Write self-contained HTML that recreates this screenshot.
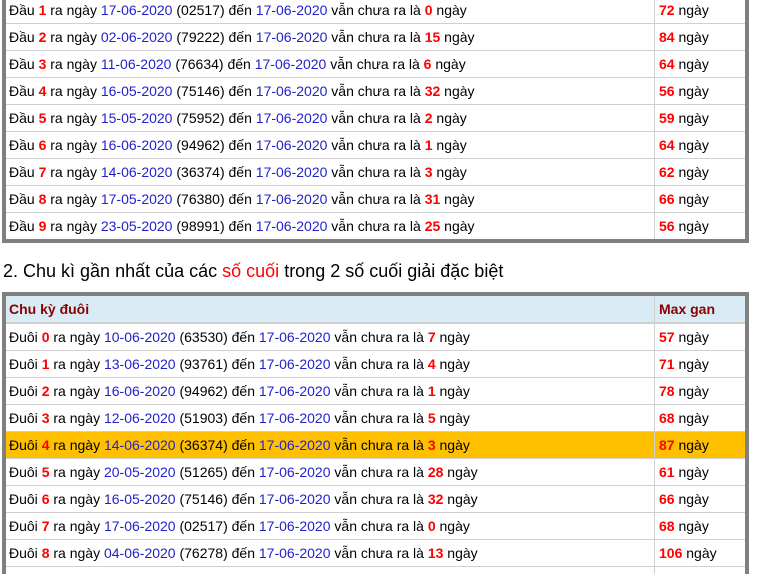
<!DOCTYPE html>
<html><head><meta charset="utf-8"><style>
html,body{margin:0;width:760px;height:574px;overflow:hidden;background:#fff;font-family:"Liberation Sans",Arial,sans-serif;font-size:14px;color:#000;position:relative}
.t{position:absolute;left:2px;width:739px;border:4px solid #808080}
.r{height:26px;border-bottom:1px solid #d0d0d0;display:flex;line-height:26px}
.r:last-child{border-bottom:none}
.c1{width:645px;padding-left:3px;border-right:1px solid #d0d0d0}
.c2{padding-left:4px}
.n{color:#f00;font-weight:bold}
.d{color:#22c}
.h{background:#d9ecf5;color:#8b0000;font-weight:bold;border-bottom:2px solid #d0d0d0;height:26px}
.y{background:#ffc000}
.title{position:absolute;left:3px;top:261px;font-size:18px}
</style></head><body>
<div class="t" style="top:-3px;border-top:none">
<div class="r"><div class="c1">Đầu <span class="n">1</span> ra ngày <span class="d">17-06-2020</span> (02517) đến <span class="d">17-06-2020</span> vẫn chưa ra là <span class="n">0</span> ngày</div><div class="c2"><span class="n">72</span> ngày</div></div>
<div class="r"><div class="c1">Đầu <span class="n">2</span> ra ngày <span class="d">02-06-2020</span> (79222) đến <span class="d">17-06-2020</span> vẫn chưa ra là <span class="n">15</span> ngày</div><div class="c2"><span class="n">84</span> ngày</div></div>
<div class="r"><div class="c1">Đầu <span class="n">3</span> ra ngày <span class="d">11-06-2020</span> (76634) đến <span class="d">17-06-2020</span> vẫn chưa ra là <span class="n">6</span> ngày</div><div class="c2"><span class="n">64</span> ngày</div></div>
<div class="r"><div class="c1">Đầu <span class="n">4</span> ra ngày <span class="d">16-05-2020</span> (75146) đến <span class="d">17-06-2020</span> vẫn chưa ra là <span class="n">32</span> ngày</div><div class="c2"><span class="n">56</span> ngày</div></div>
<div class="r"><div class="c1">Đầu <span class="n">5</span> ra ngày <span class="d">15-05-2020</span> (75952) đến <span class="d">17-06-2020</span> vẫn chưa ra là <span class="n">2</span> ngày</div><div class="c2"><span class="n">59</span> ngày</div></div>
<div class="r"><div class="c1">Đầu <span class="n">6</span> ra ngày <span class="d">16-06-2020</span> (94962) đến <span class="d">17-06-2020</span> vẫn chưa ra là <span class="n">1</span> ngày</div><div class="c2"><span class="n">64</span> ngày</div></div>
<div class="r"><div class="c1">Đầu <span class="n">7</span> ra ngày <span class="d">14-06-2020</span> (36374) đến <span class="d">17-06-2020</span> vẫn chưa ra là <span class="n">3</span> ngày</div><div class="c2"><span class="n">62</span> ngày</div></div>
<div class="r"><div class="c1">Đầu <span class="n">8</span> ra ngày <span class="d">17-05-2020</span> (76380) đến <span class="d">17-06-2020</span> vẫn chưa ra là <span class="n">31</span> ngày</div><div class="c2"><span class="n">66</span> ngày</div></div>
<div class="r"><div class="c1">Đầu <span class="n">9</span> ra ngày <span class="d">23-05-2020</span> (98991) đến <span class="d">17-06-2020</span> vẫn chưa ra là <span class="n">25</span> ngày</div><div class="c2"><span class="n">56</span> ngày</div></div>
</div>
<div class="title">2. Chu kì gần nhất của các <span style="color:#f00">số cuối</span> trong 2 số cuối giải đặc biệt</div>
<div class="t" style="top:292px">
<div class="r h"><div class="c1">Chu kỳ đuôi</div><div class="c2">Max gan</div></div>
<div class="r"><div class="c1">Đuôi <span class="n">0</span> ra ngày <span class="d">10-06-2020</span> (63530) đến <span class="d">17-06-2020</span> vẫn chưa ra là <span class="n">7</span> ngày</div><div class="c2"><span class="n">57</span> ngày</div></div>
<div class="r"><div class="c1">Đuôi <span class="n">1</span> ra ngày <span class="d">13-06-2020</span> (93761) đến <span class="d">17-06-2020</span> vẫn chưa ra là <span class="n">4</span> ngày</div><div class="c2"><span class="n">71</span> ngày</div></div>
<div class="r"><div class="c1">Đuôi <span class="n">2</span> ra ngày <span class="d">16-06-2020</span> (94962) đến <span class="d">17-06-2020</span> vẫn chưa ra là <span class="n">1</span> ngày</div><div class="c2"><span class="n">78</span> ngày</div></div>
<div class="r"><div class="c1">Đuôi <span class="n">3</span> ra ngày <span class="d">12-06-2020</span> (51903) đến <span class="d">17-06-2020</span> vẫn chưa ra là <span class="n">5</span> ngày</div><div class="c2"><span class="n">68</span> ngày</div></div>
<div class="r y"><div class="c1">Đuôi <span class="n">4</span> ra ngày <span class="d">14-06-2020</span> (36374) đến <span class="d">17-06-2020</span> vẫn chưa ra là <span class="n">3</span> ngày</div><div class="c2"><span class="n">87</span> ngày</div></div>
<div class="r"><div class="c1">Đuôi <span class="n">5</span> ra ngày <span class="d">20-05-2020</span> (51265) đến <span class="d">17-06-2020</span> vẫn chưa ra là <span class="n">28</span> ngày</div><div class="c2"><span class="n">61</span> ngày</div></div>
<div class="r"><div class="c1">Đuôi <span class="n">6</span> ra ngày <span class="d">16-05-2020</span> (75146) đến <span class="d">17-06-2020</span> vẫn chưa ra là <span class="n">32</span> ngày</div><div class="c2"><span class="n">66</span> ngày</div></div>
<div class="r"><div class="c1">Đuôi <span class="n">7</span> ra ngày <span class="d">17-06-2020</span> (02517) đến <span class="d">17-06-2020</span> vẫn chưa ra là <span class="n">0</span> ngày</div><div class="c2"><span class="n">68</span> ngày</div></div>
<div class="r"><div class="c1">Đuôi <span class="n">8</span> ra ngày <span class="d">04-06-2020</span> (76278) đến <span class="d">17-06-2020</span> vẫn chưa ra là <span class="n">13</span> ngày</div><div class="c2"><span class="n">106</span> ngày</div></div>
<div class="r"><div class="c1">&nbsp;</div><div class="c2"></div></div>
</div>
</body></html>
